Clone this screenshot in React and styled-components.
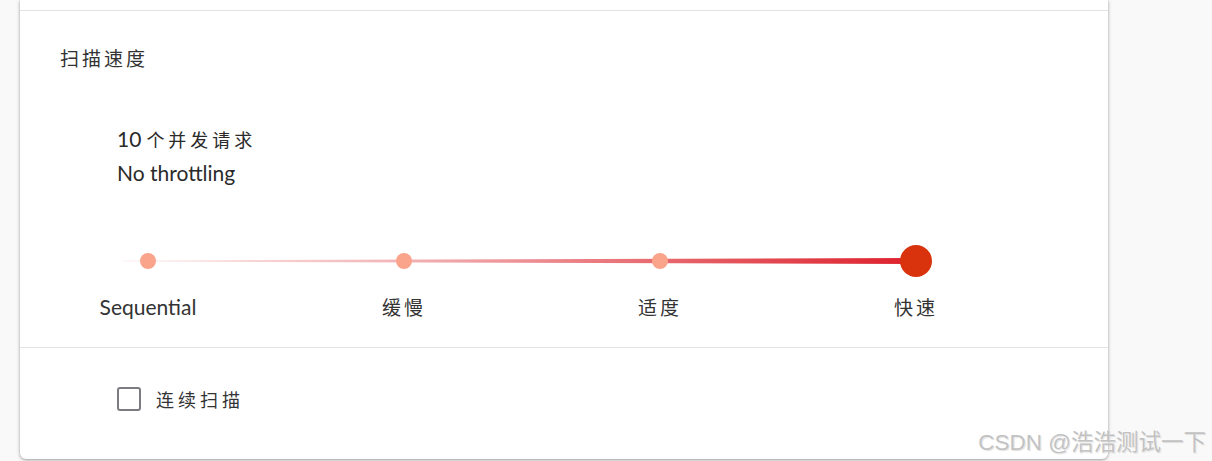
import React from 'react'
import styled, { createGlobalStyle } from 'styled-components'

const GlobalStyle = createGlobalStyle`
  html, body {
    margin: 0;
    padding: 0;
    background: #f9f9f9;
  }
  body {
    font-family: Lato, "Noto Sans CJK SC", sans-serif;
    color: #2b2b2b;
    overflow: hidden;
  }
`

const Page = styled.div`
  position: relative;
  width: 1212px;
  height: 461px;
  overflow: hidden;
`

const Card = styled.div`
  margin-left: 20px;
  width: 1088px;
  height: 459px;
  background: #fff;
  border-bottom-left-radius: 6px;
  border-bottom-right-radius: 6px;
  box-shadow: 0 1px 3px rgba(0, 0, 0, 0.35), 0 0 6px rgba(0, 0, 0, 0.08);
  display: flex;
  flex-direction: column;
`

const Section = styled.section`
  border-top: ${({ $first }) => ($first ? 'none' : '1px solid #e3e3e3')};
  height: ${({ $h }) => $h}px;
  box-sizing: border-box;
  padding: ${({ $pad }) => $pad || '0'};
`

const Title = styled.h3`
  margin: 0 0 52px 40px;
  font-size: 19px;
  line-height: 24px;
  font-weight: 400;
  letter-spacing: 3px;
  color: #333;
  font-family: "Noto Sans CJK SC", sans-serif;
`

const Summary = styled.div`
  padding-left: 97px;
  font-size: 21px;
  line-height: 33px;
  color: #2a2a2a;
`

const Cjk = styled.span`
  font-family: "Noto Sans CJK SC", sans-serif;
  font-size: 18px;
  letter-spacing: 4px;
  margin-left: 5px;
`

const Track = styled.svg`
  display: block;
  margin-top: 52px;
`

const Labels = styled.div`
  display: grid;
  grid-template-columns: repeat(4, 256px);
  margin-top: 14px;
`

const Label = styled.span`
  text-align: center;
  font-size: ${({ $cjk }) => ($cjk ? '19px' : '21px')};
  line-height: 24px;
  color: #333;
  font-family: ${({ $cjk }) => ($cjk ? '"Noto Sans CJK SC", sans-serif' : 'Lato, sans-serif')};
  letter-spacing: ${({ $cjk }) => ($cjk ? '3px' : '0')};
`

const CheckRow = styled.label`
  display: flex;
  align-items: center;
  gap: 15px;
  padding-left: 97px;
  height: 24px;
`

const Box = styled.span`
  width: 24px;
  height: 24px;
  box-sizing: border-box;
  border: 2.5px solid #7c7b81;
  border-radius: 3px;
`

const CheckText = styled.span`
  font-family: "Noto Sans CJK SC", sans-serif;
  font-size: 18px;
  letter-spacing: 4px;
  color: #333;
`

const Watermark = styled.div`
  position: absolute;
  right: 6px;
  bottom: 5px;
  font-family: "Liberation Sans", "Noto Sans CJK SC", sans-serif;
  font-size: 22.5px;
  color: #c2c2c2;
  text-shadow: 0 0 2px #fff, 1px 1px 1px rgba(0, 0, 0, 0.15);
`

const steps = [
  { label: 'Sequential', cjk: false },
  { label: '缓慢', cjk: true },
  { label: '适度', cjk: true },
  { label: '快速', cjk: true },
]

const SpeedTrack = ({ active }) => {
  const xs = [128, 384, 640, 896]
  return (
    <Track width="1024" height="40" viewBox="0 0 1024 40">
      <defs>
        <linearGradient id="trackGrad" x1="103" y1="0" x2="896" y2="0" gradientUnits="userSpaceOnUse">
          <stop offset="0" stopColor="#fdf0f0" />
          <stop offset="0.35" stopColor="#f2b4b6" />
          <stop offset="0.7" stopColor="#e6636a" />
          <stop offset="1" stopColor="#dd1f2b" />
        </linearGradient>
      </defs>
      <polygon points="103,19.5 103,20.5 896,23 896,17" fill="url(#trackGrad)" />
      {xs.map((x, i) =>
        i === active ? (
          <circle key={i} cx={x} cy="20" r="16" fill="#d9330e" />
        ) : (
          <circle key={i} cx={x} cy="20" r="8" fill="#fba48c" />
        )
      )}
    </Track>
  )
}

export default function App() {
  return (
    <Page>
      <GlobalStyle />
      <Card>
        <Section $first $h={10} />
        <Section $h={337} $pad="35px 0 0 0">
          <Title>扫描速度</Title>
          <Summary>
            <div>
              10<Cjk>个并发请求</Cjk>
            </div>
            <div>No throttling</div>
          </Summary>
          <SpeedTrack active={3} />
          <Labels>
            {steps.map((s) => (
              <Label key={s.label} $cjk={s.cjk}>
                {s.label}
              </Label>
            ))}
          </Labels>
        </Section>
        <Section $h={112} $pad="39px 0 0 0">
          <CheckRow>
            <Box />
            <CheckText>连续扫描</CheckText>
          </CheckRow>
        </Section>
      </Card>
      <Watermark>CSDN @浩浩测试一下</Watermark>
    </Page>
  )
}
